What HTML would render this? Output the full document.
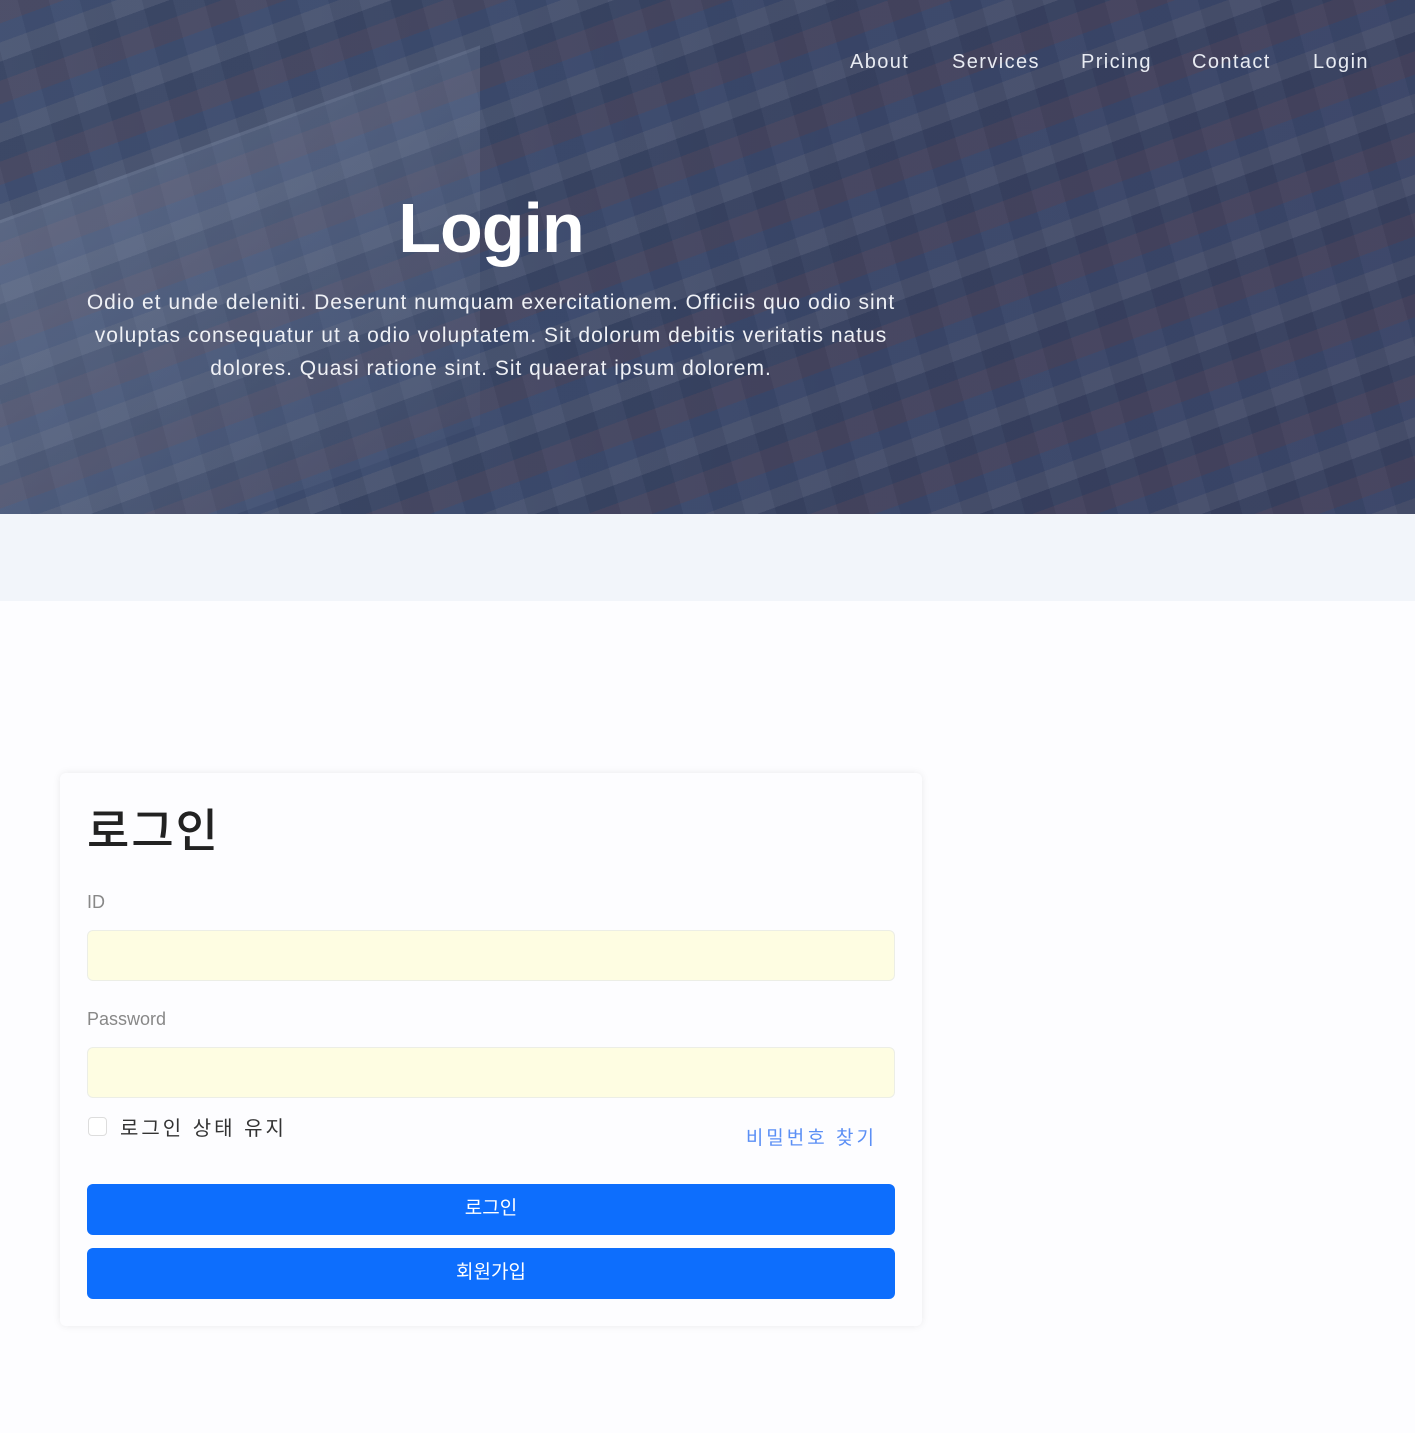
<!DOCTYPE html>
<html><head><meta charset="utf-8"><style>
*{margin:0;padding:0;box-sizing:border-box}
body{width:1415px;height:1433px;background:#fdfdff;font-family:"Liberation Sans","Noto Sans CJK KR",sans-serif;position:relative;overflow:hidden}
.hero{position:absolute;left:0;top:0;width:1415px;height:514px;overflow:hidden;
background:
linear-gradient(rgba(45,58,92,.5),rgba(45,58,92,.5)),
repeating-linear-gradient(160deg,rgba(140,70,70,.25) 0 22px,rgba(60,90,150,.25) 22px 40px,rgba(190,190,200,.18) 40px 58px,rgba(40,50,80,.25) 58px 76px),
repeating-linear-gradient(75deg,rgba(255,255,255,.05) 0 30px,rgba(0,0,0,.07) 30px 60px),
linear-gradient(90deg,#5c6882 0%,#505c77 35%,#4a506b 60%,#4b4d68 100%);}
.hero .left{position:absolute;left:-40px;top:140px;width:520px;height:380px;background:linear-gradient(160deg,rgba(150,165,190,.3),rgba(90,105,135,.15));transform:skewY(-20deg)}
nav span{position:absolute;top:51px;color:#e8ebf2;font-size:20px;letter-spacing:1.4px}
h1{position:absolute;left:0;width:982px;text-align:center;top:188px;color:#fff;font-size:70px;font-weight:600;letter-spacing:-1px}
.sub{position:absolute;left:30px;width:922px;text-align:center;top:286px;color:#eef0f5;font-size:21px;line-height:33px;letter-spacing:1px;white-space:nowrap}
.band{position:absolute;top:514px;left:0;width:1415px;height:87px;background:#f2f5fa}
.card{position:absolute;left:60px;top:773px;width:862px;height:553px;background:#fdfdff;border-radius:6px;box-shadow:0 0 8px rgba(0,0,0,.08)}
.card h2{position:absolute;left:27px;top:22px;font-size:46px;font-weight:500;color:#222;letter-spacing:2px}
.lbl{position:absolute;left:27px;font-size:18px;color:#888}
.inp{position:absolute;left:27px;width:808px;height:51px;background:#fefde2;border:1px solid #eceee6;border-radius:6px}
.cb{position:absolute;left:28px;top:344px;width:19px;height:19px;border:1px solid #ddd;border-radius:4px;background:#fff}
.cbl{position:absolute;left:60px;top:339px;font-size:20px;color:#333;letter-spacing:3px}
.fp{position:absolute;right:45px;top:350px;font-size:19px;color:#5b8ff5;letter-spacing:3px}
.btn{position:absolute;left:27px;width:808px;height:51px;background:#0d6efd;border-radius:6px;color:#fff;font-size:19px;text-align:center;line-height:50px}
</style></head><body>
<div class="hero"><div class="left"></div>
<nav><span style="left:850px">About</span><span style="left:952px">Services</span><span style="left:1081px">Pricing</span><span style="left:1192px">Contact</span><span style="left:1313px">Login</span></nav>
<h1>Login</h1>
<div class="sub">Odio et unde deleniti. Deserunt numquam exercitationem. Officiis quo odio sint<br>voluptas consequatur ut a odio voluptatem. Sit dolorum debitis veritatis natus<br>dolores. Quasi ratione sint. Sit quaerat ipsum dolorem.</div>
</div>
<div class="band"></div>
<div class="card">
<h2>로그인</h2>
<div class="lbl" style="top:119px">ID</div>
<div class="inp" style="top:157px"></div>
<div class="lbl" style="top:236px">Password</div>
<div class="inp" style="top:274px"></div>
<div class="cb"></div><div class="cbl">로그인 상태 유지</div>
<div class="fp">비밀번호 찾기</div>
<div class="btn" style="top:411px">로그인</div>
<div class="btn" style="top:475px">회원가입</div>
</div>
</body></html>
